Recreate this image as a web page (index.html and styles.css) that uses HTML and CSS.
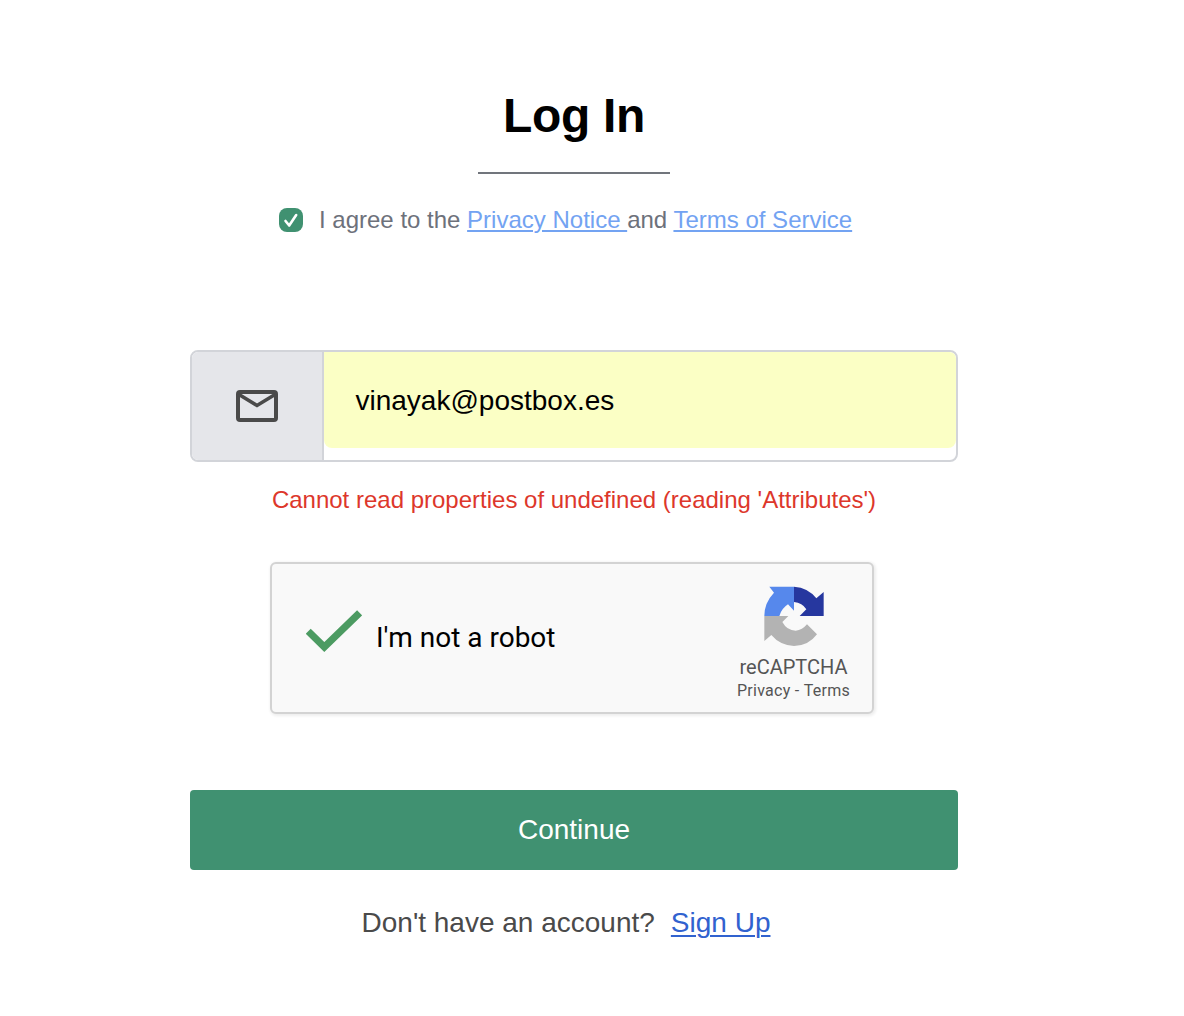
FILE: index.html
```html
<!DOCTYPE html>
<html lang="en">
<head>
<meta charset="utf-8">
<title>Log In</title>
<link rel="stylesheet" href="styles.css">
</head>
<body>
<main class="login">
  <h1 class="title">Log In</h1>
  <div class="divider"></div>
  <div class="agree">
    <svg class="checkbox" viewBox="0 0 24 24"><rect width="24" height="24" rx="8" fill="#409171"/><path d="M6.5 13 10.2 17.5 17.2 7" fill="none" stroke="#fff" stroke-width="2.6" stroke-linecap="round" stroke-linejoin="round"/></svg>
    <span class="agree-text"><span class="agree-lead">I agree to the </span><a href="#">Privacy Notice </a>and <a href="#">Terms of Service</a></span>
  </div>
  <div class="field">
    <div class="field-icon">
      <svg class="mail" viewBox="0 0 42 32"><rect x="2" y="2" width="38" height="28" rx="2" fill="none" stroke="#4a4a4a" stroke-width="4"/><path d="M3 4.5 21 15.5 39 4.5" fill="none" stroke="#4a4a4a" stroke-width="3.6"/></svg>
    </div>
    <div class="field-body"><div class="field-value">vinayak@postbox.es</div></div>
  </div>
  <p class="error">Cannot read properties of undefined (reading 'Attributes')</p>
  <div class="captcha">
    <svg class="tick" viewBox="0 0 56 43"><path d="M2.2 21.2 18.3 37 53.6 2.8" fill="none" stroke="#4c9b62" stroke-width="7.2"/></svg>
    <span class="captcha-label">I'm not a robot</span>
    <div class="brand">
      <svg class="logo" viewBox="27 18 180 183">
        <path d="M43 20H117V92L99 73Q80 85 73 108H28Q28 68 57 38Z" fill="#5688ec"/>
        <path d="M117 20Q160 23 184 55L206 36V108H134L154 88Q142 68 117 66Z" fill="#26379f"/>
        <path d="M28 108H100L82 126Q96 152 122 152Q142 150 156 133L186 163Q160 198 117 198Q75 196 49 165L28 183Z" fill="#b3b3b3"/>
      </svg>
      <span class="brand-name">reCAPTCHA</span>
      <span class="brand-links">Privacy&nbsp;-&nbsp;Terms</span>
    </div>
  </div>
  <button class="continue">Continue</button>
  <p class="signup"><span>Don't have an account?</span><a href="#">Sign Up</a></p>
</main>
</body>
</html>
```
FILE: styles.css
```css
* { box-sizing: border-box; }
body {
  margin: 0;
  background: #fff;
  font-family: "Liberation Sans", Arial, sans-serif;
  color: #000;
}
.login {
  width: 768px;
  margin-left: 190px;
  padding-top: 88px;
  display: flex;
  flex-direction: column;
  align-items: center;
}
.title {
  margin: 0;
  font-size: 48px;
  line-height: 56px;
  font-weight: 700;
  letter-spacing: -0.3px;
}
.divider {
  width: 192px;
  height: 2px;
  margin-top: 28px;
  background: #71757c;
}
.agree {
  align-self: flex-start;
  display: flex;
  align-items: center;
  gap: 16px;
  height: 32px;
  margin: 30px 0 0 89px;
  font-size: 24px;
  color: #6d717b;
  white-space: nowrap;
}
.checkbox { width: 24px; height: 24px; }
.agree a {
  color: #73a3f2;
  text-decoration-thickness: 2px;
  text-underline-offset: 2px;
}
.field {
  display: flex;
  width: 768px;
  height: 112px;
  margin-top: 114px;
  border: 2px solid #d2d4d9;
  border-radius: 8px;
  overflow: hidden;
}
.field-icon {
  width: 132px;
  border-right: 2px solid #d2d4d9;
  background: #e5e6ea;
  display: flex;
  align-items: center;
  justify-content: center;
}
.mail { width: 42px; height: 32px; }
.field-body { flex: 1; }
.field-value {
  height: 96px;
  padding-left: 31.5px;
  border-radius: 0 6px 8px 8px;
  background: #fbffc5;
  font-size: 28px;
  line-height: 98px;
}
.error {
  margin: 22px 0 0;
  font-size: 24px;
  line-height: 32px;
  color: #dd372b;
  white-space: nowrap;
}
.captcha {
  display: flex;
  width: 604px;
  height: 152px;
  margin: 46px 4px 0 0;
  padding-left: 34px;
  border: 2px solid #d3d3d3;
  border-radius: 6px;
  background: #f9f9f9;
  box-shadow: 1px 1px 3px 1px rgba(0, 0, 0, 0.07);
  font-family: Roboto, sans-serif;
}
.tick { width: 56px; height: 43px; margin-top: 46px; }
.captcha-label {
  margin: 57px 0 0 14px;
  font-size: 28px;
  line-height: 34px;
}
.brand {
  width: 116px;
  margin: 22px 20.5px 0 auto;
  display: flex;
  flex-direction: column;
  align-items: center;
  color: #555;
  white-space: nowrap;
}
.logo { width: 60px; height: 61px; }
.brand-name { margin-top: 8px; font-size: 20px; line-height: 24px; }
.brand-links { font-size: 16px; line-height: 24px; letter-spacing: 0.27px; }
.continue {
  width: 768px;
  height: 80px;
  margin-top: 76px;
  padding: 0;
  border: 0;
  border-radius: 4px;
  background: #409171;
  color: #fff;
  font: 28px "Liberation Sans", Arial, sans-serif;
}
.signup {
  display: flex;
  gap: 16px;
  margin: 36px 16px 0 0;
  font-size: 28px;
  line-height: 34px;
  color: #4a4a4a;
  white-space: nowrap;
}
.signup a {
  color: #3162cf;
  text-decoration-thickness: 2px;
  text-underline-offset: 3px;
}
```
